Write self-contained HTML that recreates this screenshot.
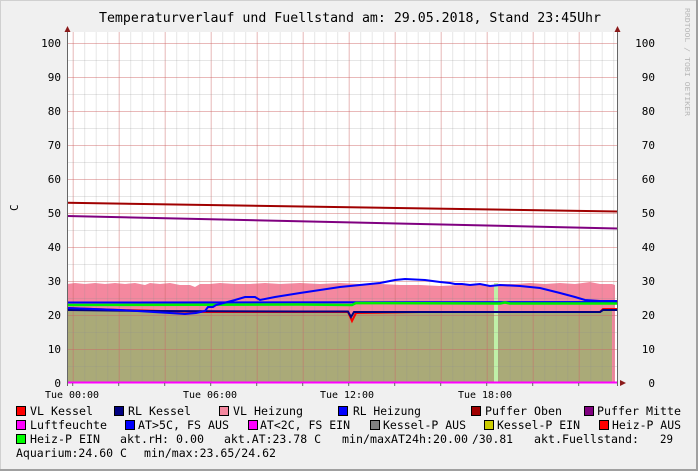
<!DOCTYPE html>
<html><head><meta charset="utf-8"><style>
html,body{margin:0;padding:0;background:#f0f0f0;}
svg{display:block;}
text{font-family:"DejaVu Sans Mono","Liberation Mono",monospace;fill:#000;}
</style></head><body>
<svg width="698" height="471" viewBox="0 0 698 471" xmlns="http://www.w3.org/2000/svg">
<defs>
<pattern id="vmin" x="72.7" y="0" width="11.5" height="471" patternUnits="userSpaceOnUse"><rect x="0" y="0" width="1" height="471" fill="rgba(140,140,140,0.22)"/></pattern>
<pattern id="vmaj" x="72.7" y="0" width="46" height="471" patternUnits="userSpaceOnUse"><rect x="0" y="0" width="1" height="471" fill="rgba(240,80,80,0.3)"/></pattern>
<pattern id="hmin" x="0" y="26" width="698" height="17" patternUnits="userSpaceOnUse"><rect x="0" y="0" width="698" height="1" fill="rgba(140,140,140,0.22)"/></pattern>
<pattern id="hmaj" x="0" y="43" width="698" height="34" patternUnits="userSpaceOnUse"><rect x="0" y="0" width="698" height="1" fill="rgba(240,80,80,0.3)"/></pattern>
</defs>
<rect x="0" y="0" width="698" height="471" fill="#f0f0f0"/>
<rect x="0.5" y="0.5" width="697" height="470" fill="none" stroke="#d0d0d0"/>
<line x1="697" y1="0" x2="697" y2="471" stroke="#a0a0a0" stroke-width="2"/>
<line x1="0" y1="470" x2="698" y2="470" stroke="#a0a0a0" stroke-width="2"/>

<text x="99" y="22" font-size="13" textLength="502" lengthAdjust="spacingAndGlyphs">Temperaturverlauf und Fuellstand am: 29.05.2018, Stand 23:45Uhr</text>
<text transform="translate(685,8) rotate(90)" font-size="7" style="fill:#b8b8b8" textLength="108" lengthAdjust="spacingAndGlyphs">RRDTOOL / TOBI OETIKER</text>
<text transform="translate(18,211) rotate(-90)" font-size="11">C</text>

<rect x="67" y="32" width="550" height="351" fill="#fff"/>
<path d="M67,383 L67,284 L75,283 L85,284 L95,283 L105,284 L115,283 L125,284 L135,283 L145,285 L150,283 L160,284 L170,283 L180,285 L190,285 L195,287 L200,284 L210,284 L220,283 L235,284 L250,284 L265,283 L280,284 L300,283 L320,284 L340,283 L360,284 L380,284 L400,285 L420,285 L440,286 L460,285 L480,285 L495,285 L500,284 L515,284 L530,283 L545,284 L560,283 L575,284 L590,282 L600,284 L612,284 L615,285 L615,383 Z" fill="#f4889f"/>
<path d="M67,383 L67,310 L120,311 L200,312 L300,312 L349,312 L351,318 L354,312 L420,312 L500,312 L600,312 L603,310 L612,310 L612,383 Z" fill="#aaaa78"/>
<rect x="494" y="283" width="4" height="100" fill="#bff0a8"/>
<rect x="67" y="32" width="550" height="351" fill="url(#vmin)"/>
<rect x="67" y="32" width="550" height="351" fill="url(#vmaj)"/>
<rect x="67" y="32" width="550" height="351" fill="url(#hmin)"/>
<rect x="67" y="32" width="550" height="351" fill="url(#hmaj)"/>

<path d="M67,202.8 L617,211.5" stroke="#a00000" stroke-width="2" fill="none"/>
<path d="M67,216 L617,228.5" stroke="#800080" stroke-width="2" fill="none"/>
<path d="M67,302.5 L617,302" stroke="#0000ff" stroke-width="2" fill="none"/>
<path d="M67,305 L300,304.5 L352,305 L356,303 L500,303.5 L505,302.5 L510,303.5 L617,303.5" stroke="#00ee00" stroke-width="2.5" fill="none"/>
<path d="M67,308 L120,310 L200,312 L205,312 L270,312 L348,312 L352,321 L356,313 L420,312 L600,312 L603,309 L617,309" stroke="#ff0000" stroke-width="2" fill="none"/>
<path d="M67,310 L150,311 L300,311.5 L348,311.5 L351,317 L354,312 L600,312 L603,310 L617,310" stroke="#000080" stroke-width="2" fill="none"/>
<path d="M67,308 L120,310 L170,313 L185,314 L196,313 L205,311 L208,307 L213,307 L216,305 L235,300 L245,297 L255,297 L260,300 L275,297 L300,293 L320,290 L340,287 L360,285 L380,283 L395,280 L405,279 L425,280 L440,282 L450,283 L455,284 L462,284 L470,285 L480,284 L490,286 L500,285 L520,286 L540,288 L560,293 L575,297 L585,300 L600,301 L617,301" stroke="#0000ff" stroke-width="2" fill="none"/>
<line x1="67" y1="382.5" x2="617" y2="382.5" stroke="#ff00ff" stroke-width="2"/>

<line x1="67.5" y1="30" x2="67.5" y2="386" stroke="#666" stroke-width="1"/>
<line x1="617.5" y1="30" x2="617.5" y2="386" stroke="#666" stroke-width="1"/>
<polygon points="64.5,32 70.5,32 67.5,26" fill="#8b1a1a"/>
<polygon points="614.5,32 620.5,32 617.5,26" fill="#8b1a1a"/>
<polygon points="620,380 620,386 626,383" fill="#8b1a1a"/>
<g stroke="#666" stroke-width="1">
<line x1="72.7" y1="383" x2="72.7" y2="386"/><line x1="118.7" y1="383" x2="118.7" y2="386"/><line x1="164.7" y1="383" x2="164.7" y2="386"/><line x1="210.7" y1="383" x2="210.7" y2="386"/><line x1="256.7" y1="383" x2="256.7" y2="386"/><line x1="302.7" y1="383" x2="302.7" y2="386"/><line x1="348.7" y1="383" x2="348.7" y2="386"/><line x1="394.7" y1="383" x2="394.7" y2="386"/><line x1="440.7" y1="383" x2="440.7" y2="386"/><line x1="486.7" y1="383" x2="486.7" y2="386"/><line x1="532.7" y1="383" x2="532.7" y2="386"/><line x1="578.7" y1="383" x2="578.7" y2="386"/>
</g>

<g font-size="11" text-anchor="end">
<text x="61" y="47">100</text><text x="61" y="81">90</text><text x="61" y="115">80</text><text x="61" y="149">70</text><text x="61" y="183">60</text><text x="61" y="217">50</text><text x="61" y="251">40</text><text x="61" y="285">30</text><text x="61" y="319">20</text><text x="61" y="353">10</text><text x="61" y="387">0</text>
<text x="655" y="47">100</text><text x="655" y="81">90</text><text x="655" y="115">80</text><text x="655" y="149">70</text><text x="655" y="183">60</text><text x="655" y="217">50</text><text x="655" y="251">40</text><text x="655" y="285">30</text><text x="655" y="319">20</text><text x="655" y="353">10</text><text x="655" y="387">0</text>
</g>
<g font-size="10">
<text x="45" y="398" textLength="54" lengthAdjust="spacingAndGlyphs">Tue 00:00</text>
<text x="183" y="398" textLength="54" lengthAdjust="spacingAndGlyphs">Tue 06:00</text>
<text x="320" y="398" textLength="54" lengthAdjust="spacingAndGlyphs">Tue 12:00</text>
<text x="458" y="398" textLength="54" lengthAdjust="spacingAndGlyphs">Tue 18:00</text>
</g>

<g stroke="#000" stroke-width="1">
<rect x="16.5" y="406.5" width="9" height="9" fill="#ff0000"/>
<rect x="114.5" y="406.5" width="9" height="9" fill="#000080"/>
<rect x="219.5" y="406.5" width="9" height="9" fill="#f4889f"/>
<rect x="338.5" y="406.5" width="9" height="9" fill="#0000ff"/>
<rect x="471.5" y="406.5" width="9" height="9" fill="#a00000"/>
<rect x="584.5" y="406.5" width="9" height="9" fill="#800080"/>
<rect x="16.5" y="420.5" width="9" height="9" fill="#ff00ff"/>
<rect x="125.5" y="420.5" width="9" height="9" fill="#0000ff"/>
<rect x="248.5" y="420.5" width="9" height="9" fill="#ff00ff"/>
<rect x="370.5" y="420.5" width="9" height="9" fill="#808080"/>
<rect x="484.5" y="420.5" width="9" height="9" fill="#cccc00"/>
<rect x="599.5" y="420.5" width="9" height="9" fill="#ff0000"/>
<rect x="16.5" y="434.5" width="9" height="9" fill="#00ff00"/>
</g>
<g font-size="11.5">
<text x="30" y="415" textLength="63" lengthAdjust="spacingAndGlyphs">VL Kessel</text>
<text x="128" y="415" textLength="63" lengthAdjust="spacingAndGlyphs">RL Kessel</text>
<text x="233" y="415" textLength="70" lengthAdjust="spacingAndGlyphs">VL Heizung</text>
<text x="353" y="415" textLength="68" lengthAdjust="spacingAndGlyphs">RL Heizung</text>
<text x="485" y="415" textLength="77" lengthAdjust="spacingAndGlyphs">Puffer Oben</text>
<text x="597" y="415" textLength="84" lengthAdjust="spacingAndGlyphs">Puffer Mitte</text>
<text x="30" y="429" textLength="77" lengthAdjust="spacingAndGlyphs">Luftfeuchte</text>
<text x="138" y="429" textLength="91" lengthAdjust="spacingAndGlyphs">AT&gt;5C, FS AUS</text>
<text x="260" y="429" textLength="90" lengthAdjust="spacingAndGlyphs">AT&lt;2C, FS EIN</text>
<text x="383" y="429" textLength="83" lengthAdjust="spacingAndGlyphs">Kessel-P AUS</text>
<text x="497" y="429" textLength="83" lengthAdjust="spacingAndGlyphs">Kessel-P EIN</text>
<text x="612" y="429" textLength="69" lengthAdjust="spacingAndGlyphs">Heiz-P AUS</text>
<text x="30" y="443" textLength="70" lengthAdjust="spacingAndGlyphs">Heiz-P EIN</text>
<text x="120" y="443" textLength="84" lengthAdjust="spacingAndGlyphs">akt.rH: 0.00</text>
<text x="224" y="443" textLength="97" lengthAdjust="spacingAndGlyphs">akt.AT:23.78 C</text>
<text x="342" y="443" textLength="126" lengthAdjust="spacingAndGlyphs">min/maxAT24h:20.00</text>
<text x="472" y="443" textLength="41" lengthAdjust="spacingAndGlyphs">/30.81</text>
<text x="534" y="443" textLength="105" lengthAdjust="spacingAndGlyphs">akt.Fuellstand:</text>
<text x="660" y="443" textLength="13" lengthAdjust="spacingAndGlyphs">29</text>
<text x="16" y="457" textLength="111" lengthAdjust="spacingAndGlyphs">Aquarium:24.60 C</text>
<text x="144" y="457" textLength="132" lengthAdjust="spacingAndGlyphs">min/max:23.65/24.62</text>
</g>
</svg>
</body></html>
